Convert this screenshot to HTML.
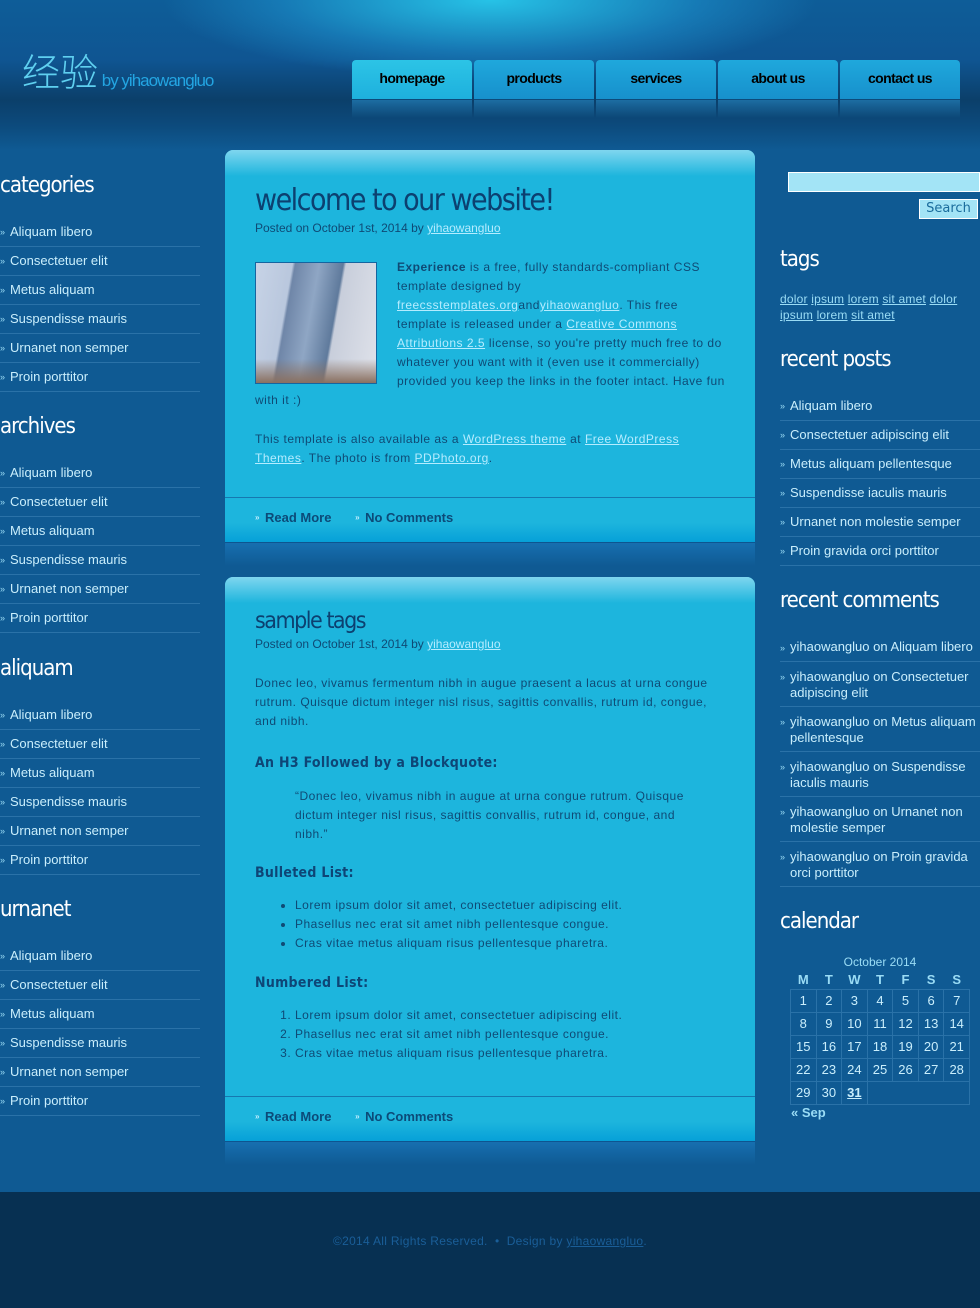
<!DOCTYPE html>
<html><head><meta charset="utf-8">
<style>
*{margin:0;padding:0;box-sizing:border-box}
body{width:980px;height:1308px;position:relative;overflow:hidden;background:#0f5a93;font-family:"Liberation Sans",Arial,sans-serif;}
.hdr{position:absolute;left:0;top:0;width:980px;height:150px;background:linear-gradient(#0e5d98 0,#0f5592 60px,#0b3f6a 100px,#0c4a7c 125px,#0f5a93 150px);}
.glow{position:absolute;left:160px;top:-80px;width:660px;height:160px;background:radial-gradient(ellipse at center,rgba(40,200,235,.95) 0,rgba(30,150,210,.5) 45%,rgba(15,90,150,0) 70%);}
.logo{position:absolute;left:22px;top:48px;color:#5fd0f0;font-size:38px;font-family:"Noto Sans CJK SC",sans-serif;font-weight:300;line-height:44px}
.logo span{font-family:"Liberation Sans",sans-serif;font-size:17px;color:#23a5e2;letter-spacing:-1px}
.tab{position:absolute;top:60px;width:120px;height:40px;border-radius:4px 4px 0 0;background:linear-gradient(#1fa8dc,#1790cc);border-bottom:1px solid #0d4a7a;text-align:center;line-height:36px;font-size:14px;color:#000;letter-spacing:-.6px;font-weight:bold}
.tab.on{background:linear-gradient(#2cc4e6,#1eb0dd)}
.ref{position:absolute;top:100px;width:120px;height:18px;background:linear-gradient(rgba(40,140,200,.6),rgba(15,80,140,0))}
.side{position:absolute;width:200px;color:#c9eefc}
.side h2{font-family:"DejaVu Sans Condensed","DejaVu Sans",sans-serif;font-weight:normal;color:#fff;font-size:22px;letter-spacing:-1px;line-height:30px;height:47px}
.side ul{list-style:none}
.side li{font-size:13px;line-height:28px;border-bottom:1px solid #2a72a8;padding-left:10px;position:relative;height:29px}
.side li:before{content:"»";position:absolute;left:0;top:0;font-size:9px;color:#9adcf5}
.rc li{height:45px;line-height:16px;padding-top:7px}
.rc li:before{top:7px;line-height:16px}
.box{position:absolute;left:225px;width:530px;background:#1db5dd;border-radius:8px 8px 0 0;color:#0f4a75;font-size:12px;line-height:19px;letter-spacing:.5px}
.box .top{height:26px;border-radius:8px 8px 0 0;background:linear-gradient(#7fd6ef,#1db5dd)}
.box h1{font-family:"DejaVu Sans Condensed","DejaVu Sans",sans-serif;font-weight:normal;color:#0c4070;letter-spacing:-1.5px}
.box a{color:#b5ecff;text-decoration:underline}
.box .meta{font-size:12px;color:#0f4a75;letter-spacing:0}
.foot{position:absolute;left:0;width:530px;height:45px;border-top:1px solid #1678b0;background:linear-gradient(#1db5dd 0,#1db5dd 25px,#06a0d8 44px);font-weight:bold;font-size:13px;color:#0c4a78;padding:10px 0 0 30px;letter-spacing:0}
.foot span{margin-right:20px;position:relative;padding-left:10px}
.foot span:before{content:"»";position:absolute;left:0;font-size:8px;color:#bfeeff}
.under{position:absolute;left:0;width:530px;height:24px;background:linear-gradient(#176fb0,#0f5a93);border-top:1px solid #0e5590}
h3{font-family:"DejaVu Sans Condensed","DejaVu Sans",sans-serif;font-size:14px;color:#0e4576;font-weight:bold;letter-spacing:.3px}
</style></head><body>
<div class="hdr"><div class="glow"></div></div>
<div class="logo">经验<span> by yihaowangluo</span></div>
<div class="tab on" style="left:352px">homepage</div>
<div class="tab" style="left:474px">products</div>
<div class="tab" style="left:596px">services</div>
<div class="tab" style="left:718px">about us</div>
<div class="tab" style="left:840px">contact us</div>
<div class="ref" style="left:352px"></div><div class="ref" style="left:474px"></div><div class="ref" style="left:596px"></div><div class="ref" style="left:718px"></div><div class="ref" style="left:840px"></div>

<div class="side" style="left:0;top:171px"><h2>categories</h2><ul><li>Aliquam libero</li><li>Consectetuer elit</li><li>Metus aliquam</li><li>Suspendisse mauris</li><li>Urnanet non semper</li><li>Proin porttitor</li></ul></div>
<div class="side" style="left:0;top:412px"><h2>archives</h2><ul><li>Aliquam libero</li><li>Consectetuer elit</li><li>Metus aliquam</li><li>Suspendisse mauris</li><li>Urnanet non semper</li><li>Proin porttitor</li></ul></div>
<div class="side" style="left:0;top:654px"><h2>aliquam</h2><ul><li>Aliquam libero</li><li>Consectetuer elit</li><li>Metus aliquam</li><li>Suspendisse mauris</li><li>Urnanet non semper</li><li>Proin porttitor</li></ul></div>
<div class="side" style="left:0;top:895px"><h2>urnanet</h2><ul><li>Aliquam libero</li><li>Consectetuer elit</li><li>Metus aliquam</li><li>Suspendisse mauris</li><li>Urnanet non semper</li><li>Proin porttitor</li></ul></div>

<div style="position:absolute;left:788px;top:172px;width:192px;height:20px;background:#a3e4f6;border:1px solid #fff"></div>
<div style="position:absolute;left:919px;top:199px;width:59px;height:20px;background:#a3e4f6;border:1px solid #fff;font-family:'DejaVu Sans',sans-serif;font-size:13px;color:#1a6c9c;text-align:center;line-height:18px">Search</div>
<div class="side" style="left:780px;top:245px"><h2>tags</h2></div>
<div style="position:absolute;left:780px;top:291px;width:195px;font-size:12px;line-height:16px;color:#9adcf5;letter-spacing:.2px"><u>dolor</u> <u>ipsum</u> <u>lorem</u> <u>sit amet</u> <u>dolor</u> <u>ipsum</u> <u>lorem</u> <u>sit amet</u></div>
<div class="side" style="left:780px;top:345px"><h2>recent posts</h2><ul><li>Aliquam libero</li><li>Consectetuer adipiscing elit</li><li>Metus aliquam pellentesque</li><li>Suspendisse iaculis mauris</li><li>Urnanet non molestie semper</li><li>Proin gravida orci porttitor</li></ul></div>
<div class="side rc" style="left:780px;top:586px"><h2 style="height:47px">recent comments</h2><ul><li style="height:29px;padding-top:6px">yihaowangluo on Aliquam libero</li><li>yihaowangluo on Consectetuer adipiscing elit</li><li>yihaowangluo on Metus aliquam pellentesque</li><li>yihaowangluo on Suspendisse iaculis mauris</li><li>yihaowangluo on Urnanet non molestie semper</li><li>yihaowangluo on Proin gravida orci porttitor</li></ul></div>
<div class="side" style="left:780px;top:907px"><h2>calendar</h2></div>
<div style="position:absolute;left:790px;top:955px;width:180px;color:#9adcf5;font-size:12px;text-align:center">October 2014</div>
<table style="position:absolute;left:790px;top:971px;width:180px;border-collapse:collapse;color:#c9eefc;font-size:13px;text-align:center">
<tr style="height:18px;font-weight:bold;color:#9adcf5"><td>M</td><td>T</td><td>W</td><td>T</td><td>F</td><td>S</td><td>S</td></tr>
<tr style="height:23px"><td style="border:1px solid #2a72a8">1</td><td style="border:1px solid #2a72a8">2</td><td style="border:1px solid #2a72a8">3</td><td style="border:1px solid #2a72a8">4</td><td style="border:1px solid #2a72a8">5</td><td style="border:1px solid #2a72a8">6</td><td style="border:1px solid #2a72a8">7</td></tr>
<tr style="height:23px"><td style="border:1px solid #2a72a8">8</td><td style="border:1px solid #2a72a8">9</td><td style="border:1px solid #2a72a8">10</td><td style="border:1px solid #2a72a8">11</td><td style="border:1px solid #2a72a8">12</td><td style="border:1px solid #2a72a8">13</td><td style="border:1px solid #2a72a8">14</td></tr>
<tr style="height:23px"><td style="border:1px solid #2a72a8">15</td><td style="border:1px solid #2a72a8">16</td><td style="border:1px solid #2a72a8">17</td><td style="border:1px solid #2a72a8">18</td><td style="border:1px solid #2a72a8">19</td><td style="border:1px solid #2a72a8">20</td><td style="border:1px solid #2a72a8">21</td></tr>
<tr style="height:23px"><td style="border:1px solid #2a72a8">22</td><td style="border:1px solid #2a72a8">23</td><td style="border:1px solid #2a72a8">24</td><td style="border:1px solid #2a72a8">25</td><td style="border:1px solid #2a72a8">26</td><td style="border:1px solid #2a72a8">27</td><td style="border:1px solid #2a72a8">28</td></tr>
<tr style="height:23px"><td style="border:1px solid #2a72a8">29</td><td style="border:1px solid #2a72a8">30</td><td style="border:1px solid #2a72a8;font-weight:bold"><u>31</u></td><td colspan="4" style="border:1px solid #2a72a8"></td></tr>
</table>
<div style="position:absolute;left:791px;top:1105px;font-size:13px;font-weight:bold;color:#9adcf5">« Sep</div>

<div class="box" style="top:150px;height:347px">
<div class="top"></div>
<h1 style="position:absolute;left:30px;top:33px;font-size:30px;line-height:36px">welcome to our website!</h1>
<div class="meta" style="position:absolute;left:30px;top:69px">Posted on October 1st, 2014 by <a>yihaowangluo</a></div>
<div style="position:absolute;left:30px;top:112px;width:122px;height:122px;border:1px solid #1565a0;background:linear-gradient(180deg,rgba(0,0,0,0) 80%,#8a7060 100%),linear-gradient(100deg,#c7d3e6 0,#b9c7dd 26%,#6f86a8 28%,#8fa6c4 45%,#5f7a9c 62%,#c8cedb 64%,#dfe2ea 100%)"></div>
<div style="position:absolute;left:30px;top:108px;width:470px">
<div style="float:left;width:142px;height:128px"></div>
<b>Experience</b> is a free, fully standards-compliant CSS template designed by <a>freecsstemplates.org</a>and<a>yihaowangluo</a>. This free template is released under a <a>Creative Commons Attributions 2.5</a> license, so you're pretty much free to do whatever you want with it (even use it commercially) provided you keep the links in the footer intact. Have fun with it :)
<p style="clear:both;padding-top:20px">This template is also available as a <a>WordPress theme</a> at <a>Free WordPress Themes</a>. The photo is from <a>PDPhoto.org</a>.</p></div>
<div class="foot" style="top:347px"><span>Read More</span> <span>No Comments</span></div>
<div class="under" style="top:392px"></div>
</div>

<div class="box" style="top:577px;height:519px">
<div class="top"></div>
<h1 style="position:absolute;left:30px;top:29px;font-size:23px;line-height:30px">sample tags</h1>
<div class="meta" style="position:absolute;left:30px;top:58px">Posted on October 1st, 2014 by <a>yihaowangluo</a></div>
<div style="position:absolute;left:30px;top:97px;width:460px">
<p>Donec leo, vivamus fermentum nibh in augue praesent a lacus at urna congue rutrum. Quisque dictum integer nisl risus, sagittis convallis, rutrum id, congue, and nibh.</p>
<h3 style="margin-top:23px">An H3 Followed by a Blockquote:</h3>
<p style="margin:14px 0 0 40px;width:390px">“Donec leo, vivamus nibh in augue at urna congue rutrum. Quisque dictum integer nisl risus, sagittis convallis, rutrum id, congue, and nibh.”</p>
<h3 style="margin-top:20px">Bulleted List:</h3>
<ul style="margin:13px 0 0 40px"><li>Lorem ipsum dolor sit amet, consectetuer adipiscing elit.</li><li>Phasellus nec erat sit amet nibh pellentesque congue.</li><li>Cras vitae metus aliquam risus pellentesque pharetra.</li></ul>
<h3 style="margin-top:21px">Numbered List:</h3>
<ol style="margin:13px 0 0 40px"><li>Lorem ipsum dolor sit amet, consectetuer adipiscing elit.</li><li>Phasellus nec erat sit amet nibh pellentesque congue.</li><li>Cras vitae metus aliquam risus pellentesque pharetra.</li></ol>
</div>
<div class="foot" style="top:519px"><span>Read More</span> <span>No Comments</span></div>
<div class="under" style="top:564px"></div>
</div>

<div style="position:absolute;left:0;top:1192px;width:980px;height:116px;background:#073052;text-align:center;font-size:12px;color:#1a5e98;padding-top:42px;letter-spacing:.3px">©2014 All Rights Reserved. &nbsp;•&nbsp; Design by <u>yihaowangluo</u>.</div>
</body></html>
